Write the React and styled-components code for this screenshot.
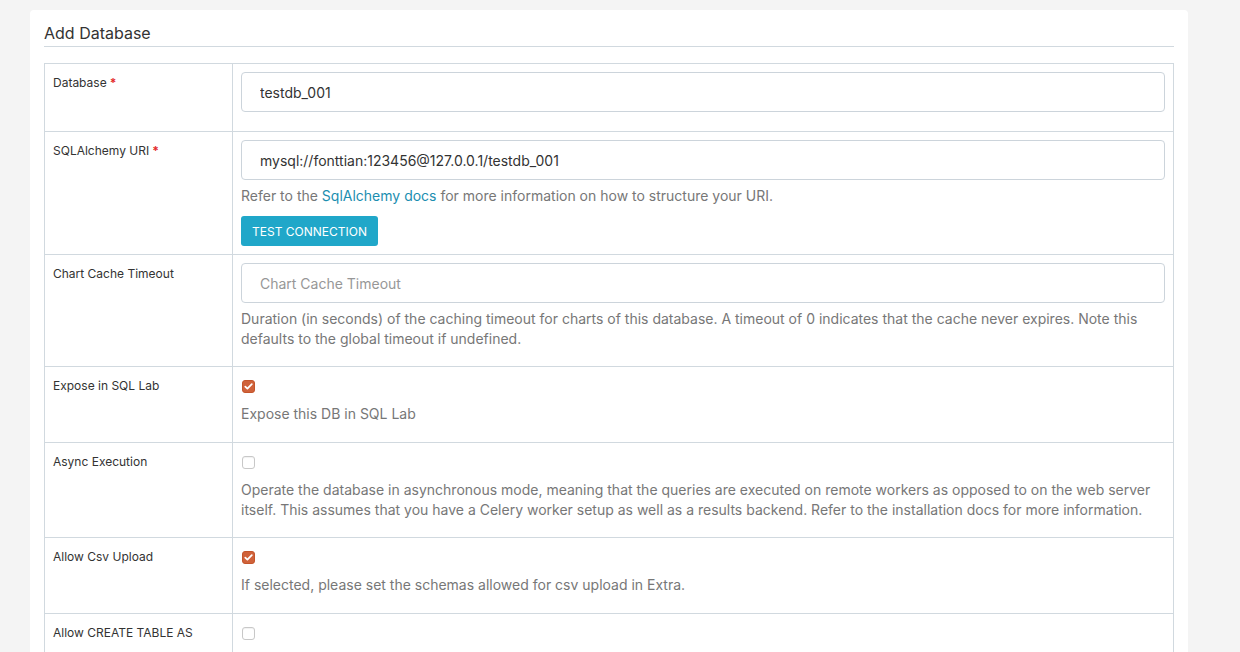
import React from "react";
import styled, { createGlobalStyle } from "styled-components";

const GlobalStyle = createGlobalStyle`
  html, body {
    margin: 0;
    padding: 0;
    background: #f4f4f4;
    font-family: Inter, "Noto Sans", "Liberation Sans", sans-serif;
    color: #333;
  }
  * { box-sizing: border-box; }
`;

const Page = styled.div`
  padding: 10px 52px 0 30px;
  height: 652px;
  overflow: hidden;
`;

const Card = styled.div`
  background: #fff;
  border-radius: 4px 4px 0 0;
  padding: 13px 14px 20px 14px;
  min-height: 700px;
`;

const Title = styled.h4`
  margin: 0 0 16px 0;
  padding-bottom: 3px;
  font-size: 16px;
  font-weight: 400;
  line-height: 20px;
  color: #333;
  border-bottom: 1px solid #d1d9df;
`;

const Table = styled.table`
  width: 100%;
  border-collapse: collapse;
  border: 1px solid #d1d9df;
`;

const Row = styled.tr`
  border-top: 1px solid #d1d9df;
`;

const LabelCell = styled.td`
  width: 188px;
  padding: 9px 8px 8px 8px;
  vertical-align: top;
  border-right: 1px solid #d1d9df;
  font-size: 12px;
  line-height: 20px;
  color: #333;
`;

const FieldCell = styled.td`
  padding: 8px 8px ${(p) => (p.$last ? "40px" : "8px")} 8px;
  vertical-align: top;
`;

const Required = styled.span`
  color: #e32a2a;
  font-weight: 700;
  margin-left: 3px;
`;

const Input = styled.input`
  display: block;
  width: 100%;
  height: 40px;
  margin: 0 0 ${(p) => (p.$tail ? "11px" : "0")} 0;
  padding: 0 18px;
  border: 1px solid #ccd4db;
  border-radius: 4px;
  font-family: inherit;
  font-size: 14px;
  color: #333;
  background: #fff;
  &::placeholder {
    color: #979797;
  }
`;

const Help = styled.p`
  margin: ${(p) => p.$top || "5px"} 0 ${(p) => p.$bottom || "10px"} 0;
  font-size: 14px;
  line-height: 20px;
  color: #777;
`;

const Link = styled.a`
  color: #1b8eb0;
  text-decoration: none;
`;

const Button = styled.button`
  display: block;
  height: 30px;
  padding: 0 11px;
  border: none;
  border-radius: 3px;
  background: #20a7c9;
  color: #fff;
  font-family: inherit;
  font-size: 12px;
  text-transform: uppercase;
`;

const CheckLine = styled.div`
  height: 20px;
  padding-top: 5px;
`;

const Box = styled.span`
  display: block;
  width: 13px;
  height: 13px;
  margin-left: 1px;
  border-radius: 3px;
  border: 1px solid ${(p) => (p.$on ? "#c4552b" : "#c8c8c8")};
  background: ${(p) => (p.$on ? "#d0623a" : "#fff")};
  box-shadow: ${(p) => (p.$on ? "none" : "inset 0 1px 1px rgba(0,0,0,0.06)")};
  svg {
    display: block;
  }
`;

function Checkbox({ on }) {
  return (
    <CheckLine>
      <Box $on={on}>
        {on && (
          <svg width="11" height="11" viewBox="0 0 11 11">
            <path
              d="M2.3 5.6 L4.4 7.6 L8.8 3.2"
              fill="none"
              stroke="#fff"
              strokeWidth="1.8"
              strokeLinecap="round"
              strokeLinejoin="round"
            />
          </svg>
        )}
      </Box>
    </CheckLine>
  );
}

export default function App() {
  return (
    <>
      <GlobalStyle />
      <Page>
        <Card>
          <Title>Add Database</Title>
          <Table>
            <tbody>
              <Row>
                <LabelCell>
                  Database<Required>*</Required>
                </LabelCell>
                <FieldCell>
                  <Input $tail defaultValue="testdb_001" />
                </FieldCell>
              </Row>
              <Row>
                <LabelCell>
                  SQLAlchemy URI<Required>*</Required>
                </LabelCell>
                <FieldCell>
                  <Input defaultValue="mysql://fonttian:123456@127.0.0.1/testdb_001" />
                  <Help $top="6px">
                    Refer to the <Link href="#">SqlAlchemy docs</Link> for more
                    information on how to structure your URI.
                  </Help>
                  <Button>Test Connection</Button>
                </FieldCell>
              </Row>
              <Row>
                <LabelCell>Chart Cache Timeout</LabelCell>
                <FieldCell>
                  <Input placeholder="Chart Cache Timeout" />
                  <Help $top="6px" $bottom="9px">
                    Duration (in seconds) of the caching timeout for charts of
                    this database. A timeout of 0 indicates that the cache never
                    expires. Note this defaults to the global timeout if
                    undefined.
                  </Help>
                </FieldCell>
              </Row>
              <Row>
                <LabelCell>Expose in SQL Lab</LabelCell>
                <FieldCell>
                  <Checkbox on />
                  <Help $top="9px" $bottom="10px">
                    Expose this DB in SQL Lab
                  </Help>
                </FieldCell>
              </Row>
              <Row>
                <LabelCell>Async Execution</LabelCell>
                <FieldCell>
                  <Checkbox />
                  <Help $top="9px" $bottom="9px">
                    Operate the database in asynchronous mode, meaning that the
                    queries are executed on remote workers as opposed to on the
                    web server itself. This assumes that you have a Celery worker
                    setup as well as a results backend. Refer to the installation
                    docs for more information.
                  </Help>
                </FieldCell>
              </Row>
              <Row>
                <LabelCell>Allow Csv Upload</LabelCell>
                <FieldCell>
                  <Checkbox on />
                  <Help $top="9px" $bottom="10px">
                    If selected, please set the schemas allowed for csv upload in
                    Extra.
                  </Help>
                </FieldCell>
              </Row>
              <Row>
                <LabelCell>Allow CREATE TABLE AS</LabelCell>
                <FieldCell $last>
                  <Checkbox />
                </FieldCell>
              </Row>
            </tbody>
          </Table>
        </Card>
      </Page>
    </>
  );
}
